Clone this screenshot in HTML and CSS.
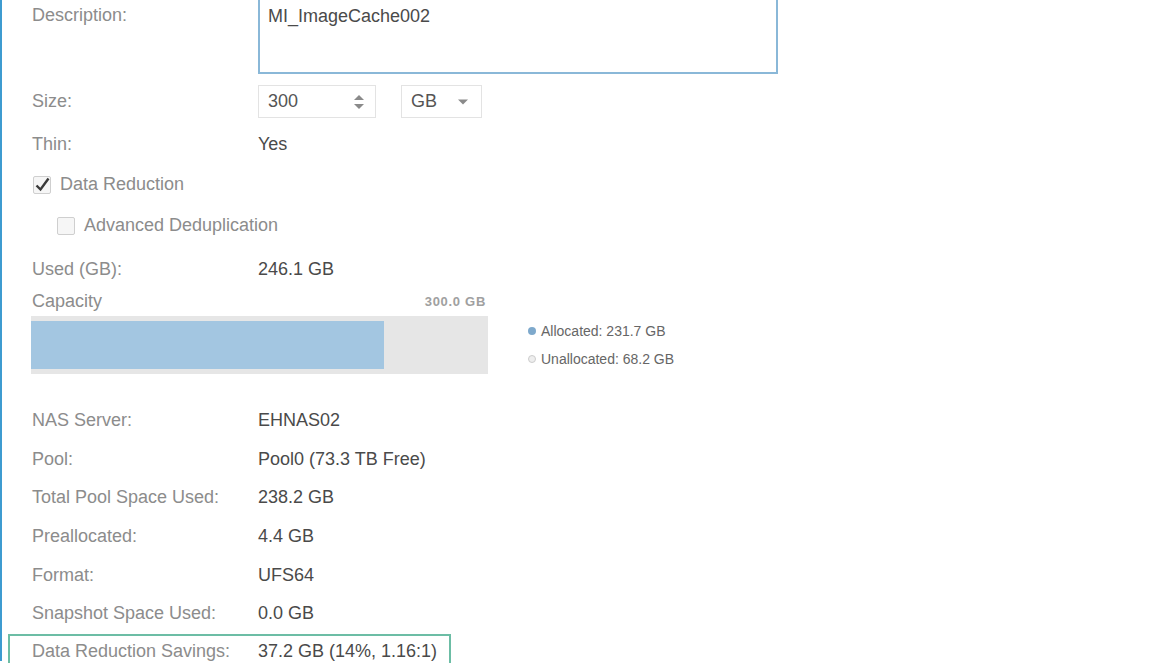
FILE: index.html
```html
<!DOCTYPE html>
<html lang="en">

<head>
  <meta charset="UTF-8">
  <meta name="viewport" content="width=device-width, initial-scale=1.0">
  <title>File System Properties</title>
  <link rel="stylesheet" href="styles.css">
</head>

<body>
  <div class="panel">
    <div class="form">
      <!-- description -->
      <div class="row row-desc">
        <span class="label">Description:</span>
        <textarea class="desc-box" readonly>MI_ImageCache002</textarea>
      </div>

      <div class="row row-tall">
        <span class="label">Size:</span>
        <div class="size-fields">
          <div class="num-input">
            <span>300</span>
            <svg class="spin" width="12" height="18" viewBox="0 0 12 18">
              <path d="M6 2 L11 7 L1 7 Z" fill="#8a8a8a" />
              <path d="M1 11 L11 11 L6 16 Z" fill="#8a8a8a" />
            </svg>
          </div>
          <div class="unit-select">
            <span>GB</span>
            <svg class="caret" width="12" height="8" viewBox="0 0 12 8">
              <path d="M1 1.5 L11 1.5 L6 6.5 Z" fill="#8a8a8a" />
            </svg>
          </div>
        </div>
      </div>

      <div class="row row-tall">
        <span class="label">Thin:</span>
        <span class="value">Yes</span>
      </div>

      <div class="check-row">
        <span class="box">
          <svg width="18" height="18" viewBox="0 0 18 18">
            <path d="M3.5 9.5 L7.5 13.5 L15.5 2.5" fill="none" stroke="#3a3a3a" stroke-width="2.4" />
          </svg>
        </span>
        <span class="check-text">Data Reduction</span>
      </div>

      <div class="check-row sub">
        <span class="box"></span>
        <span class="check-text">Advanced Deduplication</span>
      </div>

      <div class="row row-tall">
        <span class="label">Used (GB):</span>
        <span class="value">246.1 GB</span>
      </div>

      <!-- capacity chart -->
      <div class="capacity">
        <div class="capacity-chart">
          <div class="capacity-head">
            <span class="label">Capacity</span>
            <span class="total">300.0 GB</span>
          </div>
          <div class="track">
            <div class="fill" style="width: 77.2%"></div>
          </div>
        </div>
        <ul class="legend">
          <li><span class="dot dot-alloc"></span>Allocated: 231.7 GB</li>
          <li><span class="dot dot-free"></span>Unallocated: 68.2 GB</li>
        </ul>
      </div>

      <div class="details">
        <div class="row">
          <span class="label">NAS Server:</span>
          <span class="value">EHNAS02</span>
        </div>
        <div class="row">
          <span class="label">Pool:</span>
          <span class="value">Pool0 (73.3 TB Free)</span>
        </div>
        <div class="row">
          <span class="label">Total Pool Space Used:</span>
          <span class="value">238.2 GB</span>
        </div>
        <div class="row">
          <span class="label">Preallocated:</span>
          <span class="value">4.4 GB</span>
        </div>
        <div class="row">
          <span class="label">Format:</span>
          <span class="value">UFS64</span>
        </div>
        <div class="row">
          <span class="label">Snapshot Space Used:</span>
          <span class="value">0.0 GB</span>
        </div>
        <div class="row highlight">
          <span class="label">Data Reduction Savings:</span>
          <span class="value">37.2 GB (14%, 1.16:1)</span>
        </div>
      </div>
    </div>
  </div>
</body>

</html>
```

FILE: styles.css
```css
html,
body {
  margin: 0;
  padding: 0;
  height: 100%;
  overflow: hidden;
  background-color: #fff;
}

body {
  font-family: "Liberation Sans", Arial, sans-serif;
  font-size: 18px;
  color: #4a4a4a;
}

.panel {
  height: 100%;
  border-left: 2px solid #3d9bd0;
  padding-left: 30px;
  box-sizing: border-box;
}

.form {
  margin-top: -2px;
  display: flex;
  flex-direction: column;
}

.row {
  display: grid;
  grid-template-columns: 226px 1fr;
  align-items: center;
  height: 38.7px;
  padding-top: 2px;
  box-sizing: border-box;
}

.row-tall {
  height: 43px;
}

.label {
  color: #8c8c8c;
  white-space: nowrap;
}

.value {
  color: #4a4a4a;
  white-space: nowrap;
}

/* description */
.row-desc {
  height: 76px;
  align-items: start;
  margin-bottom: 5px;
  padding-top: 0;
}

.row-desc .label {
  padding-top: 7px;
}

.desc-box {
  width: 520px;
  height: 76px;
  box-sizing: border-box;
  border: 2px solid #8ab8d8;
  padding: 5px 8px;
  margin: 0;
  resize: none;
  outline: none;
  font-family: "Liberation Sans", Arial, sans-serif;
  font-size: 18px;
  line-height: 22px;
  color: #4a4a4a;
}

/* size inputs */
.size-fields {
  display: flex;
  gap: 25px;
}

.num-input,
.unit-select {
  height: 33px;
  box-sizing: border-box;
  border: 1px solid #e3e3e3;
  display: flex;
  align-items: center;
  justify-content: space-between;
  padding: 0 9px;
  color: #555;
}

.num-input {
  width: 118px;
}

.unit-select {
  width: 81px;
  padding-right: 12px;
}

.spin {
  margin-right: 1px;
}

/* checkboxes */
.check-row {
  display: flex;
  align-items: center;
  gap: 9px;
  height: 39px;
  padding-left: 1px;
}

.check-row.sub {
  height: 43px;
  padding-left: 25px;
}

.box {
  width: 18px;
  height: 18px;
  box-sizing: border-box;
  border: 1px solid #cfcfcf;
  border-radius: 2px;
  background-color: #f6f6f6;
  display: flex;
  align-items: center;
  justify-content: center;
}

.box svg {
  flex: none;
}

.check-text {
  color: #8c8c8c;
}

/* capacity */
.capacity {
  display: flex;
  align-items: flex-end;
  margin-left: -1px;
}

.capacity-chart {
  width: 457px;
}

.capacity-head {
  display: flex;
  justify-content: space-between;
  align-items: center;
  height: 22px;
  margin-bottom: 4px;
  padding-left: 1px;
}

.total {
  font-size: 13px;
  font-weight: bold;
  color: #a0a0a0;
  letter-spacing: 0.7px;
  margin-right: 2px;
}

.track {
  height: 58px;
  background-color: #e6e6e6;
  padding: 5px 0;
  box-sizing: border-box;
}

.fill {
  height: 100%;
  background-color: #a3c6e1;
}

.legend {
  list-style: none;
  margin: 0 0 1px 40px;
  padding: 0;
  font-size: 14px;
  color: #666;
}

.legend li {
  display: flex;
  align-items: center;
  height: 28px;
}

.dot {
  width: 8px;
  height: 8px;
  border-radius: 50%;
  margin-right: 5px;
  box-sizing: border-box;
}

.dot-alloc {
  background-color: #7ea9cc;
}

.dot-free {
  background-color: #eee;
  border: 1px solid #ccc;
}

/* detail list */
.details {
  margin-top: 26px;
  display: flex;
  flex-direction: column;
}

.highlight {
  margin-top: 1.4px;
  margin-left: -24px;
  width: 443px;
  height: 44px;
  border: 2px solid #6cbda5;
  padding: 0 0 8px 22px;
}
```
